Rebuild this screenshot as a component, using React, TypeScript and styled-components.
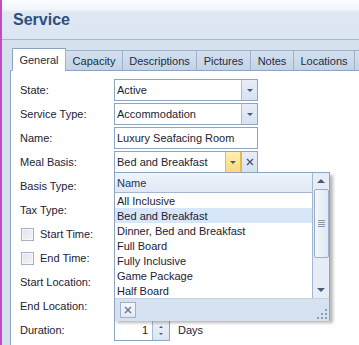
import React from 'react';
import styled, { createGlobalStyle } from 'styled-components';

const GlobalStyle = createGlobalStyle`
  html, body {
    margin: 0;
    padding: 0;
    background: #d5e1ef;
  }
  body {
    font-family: Tahoma, 'Liberation Sans', Arial, sans-serif;
    font-size: 11px;
    color: #1b2233;
  }
`;

const Page = styled.div`
  position: relative;
  width: 359px;
  height: 345px;
  overflow: hidden;
  box-sizing: border-box;
  border-left: 2px solid #c04cc4;
  background: #d5e1ef;
  display: flex;
  flex-direction: column;
`;

const Header = styled.div`
  height: 40px;
  flex: none;
  box-sizing: border-box;
  padding: 11px 0 0 11px;
  border-bottom: 1px solid #a6b8d2;
  background: linear-gradient(#fafcfe 0, #f1f5fa 10px, #dfe8f4 12px, #dce6f2 100%);
`;

const Title = styled.h1`
  margin: 0;
  font-size: 16px;
  font-weight: bold;
  color: #2f4e80;
`;

const Body = styled.div`
  flex: 1;
  display: flex;
  flex-direction: column;
  padding: 8px 0 0 8px;
`;

const TabStrip = styled.div`
  display: flex;
  align-items: flex-end;
  height: 23px;
  padding-left: 2px;
  margin-bottom: -1px;
  position: relative;
  z-index: 1;
`;

const Tab = styled.div<{ $active?: boolean; $w: number }>`
  box-sizing: border-box;
  width: ${(p) => p.$w}px;
  flex: none;
  height: ${(p) => (p.$active ? 23 : 21)}px;
  display: flex;
  align-items: center;
  justify-content: center;
  border: 1px solid ${(p) => (p.$active ? '#8ea2c2' : '#9db1cd')};
  border-bottom: ${(p) => (p.$active ? '1px solid #fff' : '1px solid #8ea2c2')};
  margin-left: ${(p) => (p.$active ? 0 : -1)}px;
  background: ${(p) =>
    p.$active ? '#ffffff' : 'linear-gradient(#d3e0ef, #c2d3e7)'};
  color: #1e2b44;
  padding-top: ${(p) => (p.$active ? 0 : 1)}px;
`;

const Panel = styled.div`
  flex: 1;
  background: #fff;
  border-left: 1px solid #8ea2c2;
  border-top: 1px solid #8ea2c2;
  padding: 7px 0 0 0;
  position: relative;
`;

const Row = styled.div`
  display: flex;
  align-items: center;
  height: 24px;
`;

const Label = styled.div`
  width: 103px;
  padding-left: 9px;
  box-sizing: border-box;
  flex: none;
  white-space: nowrap;
`;

const Field = styled.div<{ $w: number }>`
  box-sizing: border-box;
  width: ${(p) => p.$w}px;
  height: 22px;
  border: 1px solid #8fa3c2;
  display: flex;
  align-items: stretch;
  background: #fff;
`;

const FieldText = styled.div<{ $right?: boolean }>`
  flex: 1;
  display: flex;
  align-items: center;
  justify-content: ${(p) => (p.$right ? 'flex-end' : 'flex-start')};
  padding: 0 ${(p) => (p.$right ? 4 : 2)}px 0 2px;
  white-space: nowrap;
  overflow: hidden;
`;

const EditButton = styled.div<{ $hot?: boolean }>`
  width: 16px;
  flex: none;
  display: flex;
  align-items: center;
  justify-content: center;
  border-left: 1px solid ${(p) => (p.$hot ? '#e6b94e' : '#a9bad3')};
  border-right: ${(p) => (p.$hot ? '1px solid #e6b94e' : 'none')};
  background: ${(p) =>
    p.$hot ? 'linear-gradient(#fff0b4, #fed877)' : 'linear-gradient(#e7eef7, #d6e2f0)'};
  box-sizing: border-box;
`;

const Arrow = styled.div`
  width: 0;
  height: 0;
  border-left: 3px solid transparent;
  border-right: 3px solid transparent;
  border-top: 3px solid #4a5a74;
  margin-top: 1px;
`;

const SpinBox = styled.div`
  width: 16px;
  flex: none;
  display: flex;
  flex-direction: column;
  align-items: center;
  justify-content: center;
  gap: 5px;
  border-left: 1px solid #a9bad3;
  background: linear-gradient(#eef3f9, #dbe5f1);
`;

const SpinUp = styled.div`
  width: 0;
  height: 0;
  border-left: 2px solid transparent;
  border-right: 2px solid transparent;
  border-bottom: 2px solid #4a5a74;
`;

const SpinDown = styled(SpinUp)`
  border-bottom: none;
  border-top: 2px solid #4a5a74;
`;

const Check = styled.div`
  width: 13px;
  height: 13px;
  box-sizing: border-box;
  border: 1px solid #a3b2c7;
  background: linear-gradient(135deg, #dfe3e9, #f4f5f7);
  box-shadow: inset 0 0 0 1px #f6f7f9;
  margin: 0 6px 0 10px;
  flex: none;
`;

const Unit = styled.span`
  margin-left: 8px;
`;

const Popup = styled.div`
  position: absolute;
  left: 103px;
  top: 101px;
  width: 216px;
  height: 148px;
  box-sizing: border-box;
  border: 1px solid #8ea2c2;
  background: #fff;
  box-shadow: 3px 3px 3px rgba(0, 0, 0, 0.28);
  display: grid;
  grid-template-columns: 1fr 17px;
  grid-template-rows: 1fr 23px;
  z-index: 2;
`;

const ListArea = styled.div`
  display: flex;
  flex-direction: column;
  min-width: 0;
`;

const ColumnHead = styled.div`
  height: 20px;
  box-sizing: border-box;
  display: flex;
  align-items: center;
  padding-left: 2px;
  background: linear-gradient(#eff4fa, #dfe8f4);
  border-bottom: 1px solid #a4b6d0;
  color: #233452;
`;

const Item = styled.div<{ $selected?: boolean }>`
  height: 15px;
  display: flex;
  align-items: center;
  padding-left: 2px;
  white-space: nowrap;
  background: ${(p) => (p.$selected ? '#d8e6f9' : 'transparent')};
`;

const Scroll = styled.div`
  border-left: 1px solid #a4b6d0;
  background: #e6edf6;
  display: flex;
  flex-direction: column;
  align-items: center;
`;

const ScrollArrow = styled.div<{ $down?: boolean }>`
  height: 16px;
  width: 100%;
  display: flex;
  align-items: center;
  justify-content: center;
  flex: none;
  &::after {
    content: '';
    border-left: 4px solid transparent;
    border-right: 4px solid transparent;
    ${(p) => (p.$down ? 'border-top' : 'border-bottom')}: 4px solid #4b5b75;
  }
`;

const Thumb = styled.div`
  width: 15px;
  height: 69px;
  box-sizing: border-box;
  border: 1px solid #9aaecb;
  border-radius: 2px;
  background: linear-gradient(90deg, #f4f7fb, #dfe8f3);
  display: flex;
  flex-direction: column;
  align-items: center;
  justify-content: center;
  gap: 1px;
  flex: none;
`;

const Grip = styled.div`
  width: 7px;
  height: 1px;
  background: #8596b0;
`;

const Spacer = styled.div`
  flex: 1;
`;

const Footer = styled.div`
  grid-column: 1 / 3;
  background: #d6e2f0;
  border-top: 1px solid #c3d2e5;
  display: flex;
  align-items: center;
  padding-left: 5px;
  position: relative;
`;

const ClearButton = styled.div`
  width: 16px;
  height: 16px;
  box-sizing: border-box;
  border: 1px solid #9fb0c9;
  background: linear-gradient(#f4f7fb, #e0e8f2);
  display: flex;
  align-items: center;
  justify-content: center;
`;

const Resize = styled.svg`
  position: absolute;
  right: 2px;
  bottom: 2px;
`;

const items = [
  'All Inclusive',
  'Bed and Breakfast',
  'Dinner, Bed and Breakfast',
  'Full Board',
  'Fully Inclusive',
  'Game Package',
  'Half Board',
];

const tabs: [string, number][] = [
  ['General', 54],
  ['Capacity', 58],
  ['Descriptions', 75],
  ['Pictures', 55],
  ['Notes', 44],
  ['Locations', 62],
  ['', 40],
];

const Cross = ({ color = '#4a5a74' }: { color?: string }) => (
  <svg width="8" height="8" viewBox="0 0 8 8">
    <path d="M1 1L7 7M7 1L1 7" stroke={color} strokeWidth="1.4" />
  </svg>
);

export default function App() {
  return (
    <>
      <GlobalStyle />
      <Page>
        <Header>
          <Title>Service</Title>
        </Header>
        <Body>
          <TabStrip>
            {tabs.map(([t, w], i) => (
              <Tab key={i} $w={w} $active={i === 0}>
                {t}
              </Tab>
            ))}
          </TabStrip>
          <Panel>
            <Row>
              <Label>State:</Label>
              <Field $w={144}>
                <FieldText>Active</FieldText>
                <EditButton>
                  <Arrow />
                </EditButton>
              </Field>
            </Row>
            <Row>
              <Label>Service Type:</Label>
              <Field $w={144}>
                <FieldText>Accommodation</FieldText>
                <EditButton>
                  <Arrow />
                </EditButton>
              </Field>
            </Row>
            <Row>
              <Label>Name:</Label>
              <Field $w={144}>
                <FieldText>Luxury Seafacing Room</FieldText>
              </Field>
            </Row>
            <Row>
              <Label>Meal Basis:</Label>
              <Field $w={144}>
                <FieldText>Bed and Breakfast</FieldText>
                <EditButton $hot>
                  <Arrow />
                </EditButton>
                <EditButton>
                  <Cross />
                </EditButton>
              </Field>
            </Row>
            <Row>
              <Label>Basis Type:</Label>
            </Row>
            <Row>
              <Label>Tax Type:</Label>
            </Row>
            <Row>
              <Check />
              <span>Start Time:</span>
            </Row>
            <Row>
              <Check />
              <span>End Time:</span>
            </Row>
            <Row>
              <Label>Start Location:</Label>
            </Row>
            <Row>
              <Label>End Location:</Label>
            </Row>
            <Row>
              <Label>Duration:</Label>
              <Field $w={56}>
                <FieldText $right>1</FieldText>
                <SpinBox>
                  <SpinUp />
                  <SpinDown />
                </SpinBox>
              </Field>
              <Unit>Days</Unit>
            </Row>

            <Popup>
              <ListArea>
                <ColumnHead>Name</ColumnHead>
                {items.map((it) => (
                  <Item key={it} $selected={it === 'Bed and Breakfast'}>
                    {it}
                  </Item>
                ))}
              </ListArea>
              <Scroll>
                <ScrollArrow />
                <Thumb>
                  <Grip />
                  <Grip />
                  <Grip />
                  <Grip />
                </Thumb>
                <Spacer />
                <ScrollArrow $down />
              </Scroll>
              <Footer>
                <ClearButton>
                  <Cross color="#66768e" />
                </ClearButton>
                <Resize width="10" height="10" viewBox="0 0 10 10">
                  {[
                    [8, 0],
                    [8, 4],
                    [4, 4],
                    [8, 8],
                    [4, 8],
                    [0, 8],
                  ].map(([x, y], i) => (
                    <rect key={i} x={x} y={y} width="2" height="2" fill="#8c9cb4" />
                  ))}
                </Resize>
              </Footer>
            </Popup>
          </Panel>
        </Body>
      </Page>
    </>
  );
}
